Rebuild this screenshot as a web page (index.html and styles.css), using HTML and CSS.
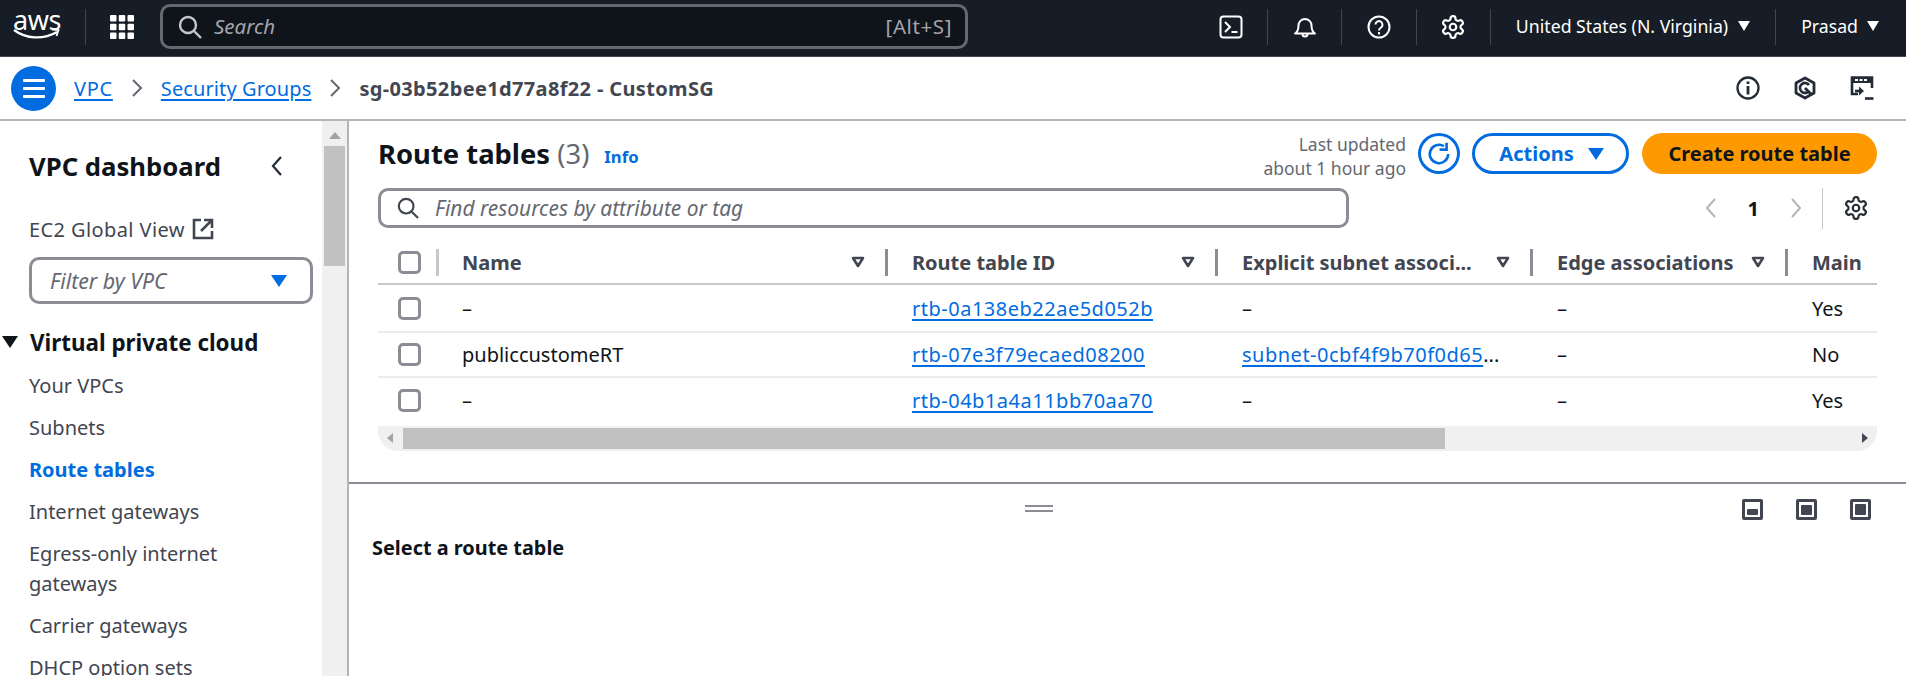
FILE: index.html
```html
<!DOCTYPE html>
<html lang="en">
<head>
<meta charset="utf-8">
<title>Route tables | VPC Console</title>
<link rel="stylesheet" href="styles.css">
</head>
<body>
<header class="topbar">
  <div class="aws"><span class="awstext">aws</span><svg viewBox="0 0 48 14" width="48" height="14" fill="none" stroke="#fff"><path d="M1 2c12 9 29 10 43 2" stroke-width="2.200"/><path d="M39 1.500l6.500.5-2 6" stroke-width="1.800"/></svg></div>
  <span class="tsep sep-logo"></span>
  <svg class="grid-ic" viewBox="0 0 24 24" width="24" height="24" fill="#fff"><rect width="6.500" height="6.500" rx="1"/><rect x="8.750" width="6.500" height="6.500" rx="1"/><rect x="17.500" width="6.500" height="6.500" rx="1"/><rect y="8.750" width="6.500" height="6.500" rx="1"/><rect x="8.750" y="8.750" width="6.500" height="6.500" rx="1"/><rect x="17.500" y="8.750" width="6.500" height="6.500" rx="1"/><rect y="17.500" width="6.500" height="6.500" rx="1"/><rect x="8.750" y="17.500" width="6.500" height="6.500" rx="1"/><rect x="17.500" y="17.500" width="6.500" height="6.500" rx="1"/></svg>
  <div class="gsearch">
    <svg viewBox="0 0 24 24" width="24" height="24" fill="none" stroke="#c6c6cd" stroke-width="2.400"><circle cx="10" cy="10" r="8"/><path d="M16 16l7 7"/></svg>
    <span class="gsearch-ph">Search</span>
    <span class="gsearch-key">[Alt+S]</span>
  </div>
  <div class="tools">
    <span class="tool"><svg viewBox="0 0 24 24" width="24" height="24" fill="none" stroke="#fff" stroke-width="2"><rect x="1.500" y="1.500" width="21" height="21" rx="3"/><path d="M6 7l5 5-5 5M12.500 17h6"/></svg></span>
    <span class="tsep"></span>
    <span class="tool"><svg viewBox="0 0 24 24" width="24" height="24" fill="none" stroke="#fff" stroke-width="2"><path d="M2 18.500c2.500-1.500 3.500-3.500 3.500-8a6.500 6.500 0 0 1 13 0c0 4.500 1 6.500 3.500 8z" stroke-linejoin="round"/><path d="M9.500 19a2.500 2.500 0 0 0 5 0"/></svg></span>
    <span class="tsep"></span>
    <span class="tool"><svg viewBox="0 0 24 24" width="24" height="24" fill="none" stroke="#fff" stroke-width="2"><circle cx="12" cy="12" r="10.500"/><path d="M8.500 9.500a3.500 3.500 0 1 1 5.500 3c-1.300.8-2 1.500-2 3"/><path d="M12 17v2.500"/></svg></span>
    <span class="tsep"></span>
    <span class="tool"><svg viewBox="1 1 22 22" width="24" height="24" fill="none" stroke="#fff" stroke-width="2"><path d="M12.220 2h-.44a2 2 0 0 0-2 2v.18a2 2 0 0 1-1 1.730l-.43.25a2 2 0 0 1-2 0l-.15-.08a2 2 0 0 0-2.730.73l-.22.38a2 2 0 0 0 .73 2.730l.15.1a2 2 0 0 1 1 1.720v.51a2 2 0 0 1-1 1.740l-.15.09a2 2 0 0 0-.73 2.730l.22.38a2 2 0 0 0 2.730.73l.15-.08a2 2 0 0 1 2 0l.43.25a2 2 0 0 1 1 1.730V20a2 2 0 0 0 2 2h.44a2 2 0 0 0 2-2v-.18a2 2 0 0 1 1-1.730l.43-.25a2 2 0 0 1 2 0l.15.08a2 2 0 0 0 2.730-.73l.22-.39a2 2 0 0 0-.73-2.730l-.15-.08a2 2 0 0 1-1-1.740v-.5a2 2 0 0 1 1-1.740l.15-.09a2 2 0 0 0 .73-2.730l-.22-.38a2 2 0 0 0-2.730-.73l-.15.08a2 2 0 0 1-2 0l-.43-.25a2 2 0 0 1-1-1.730V4a2 2 0 0 0-2-2z"/><circle cx="12" cy="12" r="3"/></svg></span>
    <span class="tsep"></span>
    <span class="region">United States (N. Virginia)<i class="caret-w"></i></span>
    <span class="tsep"></span>
    <span class="user">Prasad<i class="caret-w"></i></span>
  </div>
</header>
<nav class="crumbs">
  <span class="burger"><i></i><i></i><i></i></span>
  <a class="link crumb-first">VPC</a>
  <svg class="crumb-chev" viewBox="0 0 12 18" width="12" height="18" fill="none" stroke="#656871" stroke-width="2"><path d="M2 1l8 8-8 8"/></svg>
  <a class="link crumb-second">Security Groups</a>
  <svg class="crumb-chev" viewBox="0 0 12 18" width="12" height="18" fill="none" stroke="#656871" stroke-width="2"><path d="M2 1l8 8-8 8"/></svg>
  <span class="crumb-cur">sg-03b52bee1d77a8f22 - CustomSG</span>
  <div class="crumb-tools">
    <svg viewBox="0 0 24 24" width="24" height="24" fill="none" stroke="#232b37" stroke-width="2.300"><circle cx="12" cy="12" r="10.500"/><path d="M12 10v8.500M12 5.500v2.500" stroke-width="2.800"/></svg>
    <svg viewBox="0 0 24 24" width="24" height="24" fill="none" stroke="#232b37" stroke-width="2.800"><path d="M12 2l9 5v10l-9 5-9-5V7z" stroke-linejoin="round"/><path d="M16 9a5 5 0 1 0-1 7M12 12l6 6"/></svg>
    <svg viewBox="0 0 24 24" width="24" height="24" fill="none" stroke="#232b37"><path d="M8 18H2V1.500h20V12" stroke-width="2.600"/><rect x="1" y="1" width="22" height="6" fill="#232b37" stroke="none"/><path d="M5 4h3M9.500 4h3M14 4h3" stroke="#fff" stroke-width="2"/><path d="M5 15h7" stroke-width="2.600"/><path d="M9 10.500l5 4.500-5 4.500z" fill="#232b37" stroke="none"/><path d="M15 22.500h8.500" stroke-width="2.600"/></svg>
  </div>
</nav>
<div class="layout">
  <aside class="side">
    <div class="side-head"><h2>VPC dashboard</h2><svg viewBox="0 0 12 20" width="12" height="20" fill="none" stroke="#232b37" stroke-width="2.200"><path d="M10 1L2 10l8 9"/></svg></div>
    <div class="side-ec2">EC2 Global View<svg viewBox="0 0 22 22" width="22" height="22" fill="none" stroke="#424650" stroke-width="2.600"><path d="M9 2H2v18h18v-7M12 2h8v8M20 2L9 13"/></svg></div>
    <div class="vpc-filter"><span>Filter by VPC</span><i class="caret-b"></i></div>
    <h3 class="side-section"><i class="caret-k"></i>Virtual private cloud</h3>
    <ul class="side-list">
      <li>Your VPCs</li>
      <li>Subnets</li>
      <li class="active">Route tables</li>
      <li>Internet gateways</li>
      <li>Egress-only internet gateways</li>
      <li>Carrier gateways</li>
      <li>DHCP option sets</li>
    </ul>
  </aside>
  <div class="side-scroll"><i class="arrow-up"></i><div class="side-thumb"></div></div>
  <main class="main">
    <section class="top-pane">
      <div class="title-row">
        <h1>Route tables <span class="count">(3)</span></h1>
        <a class="info">Info</a>
        <div class="updated">Last updated<br>about 1 hour ago</div>
        <span class="refresh"><svg viewBox="0 0 24 24" width="26" height="26" fill="none" stroke="#006ce0" stroke-width="2.400"><path d="M20.500 12a8.500 8.500 0 1 1-4-7.200"/><path d="M19 1.500V8h-6.500"/></svg></span>
        <span class="btn-actions">Actions<i class="caret-b"></i></span>
        <span class="btn-create">Create route table</span>
      </div>
      <div class="filter-row">
        <div class="find">
          <svg viewBox="0 0 24 24" width="22" height="22" fill="none" stroke="#424650" stroke-width="2.400"><circle cx="10" cy="10" r="8"/><path d="M16 16l7 7"/></svg>
          <span>Find resources by attribute or tag</span>
        </div>
        <div class="pager">
          <svg viewBox="0 0 12 20" width="12" height="20" fill="none" stroke="#b4b4bb" stroke-width="2"><path d="M10 1L2 10l8 9"/></svg>
          <b>1</b>
          <svg viewBox="0 0 12 20" width="12" height="20" fill="none" stroke="#b4b4bb" stroke-width="2"><path d="M2 1l8 9-8 9"/></svg>
          <span class="pager-sep"></span>
          <svg class="pager-gear" viewBox="1 1 22 22" width="24" height="24" fill="none" stroke="#232b37" stroke-width="2"><path d="M12.220 2h-.44a2 2 0 0 0-2 2v.18a2 2 0 0 1-1 1.730l-.43.25a2 2 0 0 1-2 0l-.15-.08a2 2 0 0 0-2.730.73l-.22.38a2 2 0 0 0 .73 2.730l.15.1a2 2 0 0 1 1 1.720v.51a2 2 0 0 1-1 1.740l-.15.09a2 2 0 0 0-.73 2.730l.22.38a2 2 0 0 0 2.730.73l.15-.08a2 2 0 0 1 2 0l.43.25a2 2 0 0 1 1 1.730V20a2 2 0 0 0 2 2h.44a2 2 0 0 0 2-2v-.18a2 2 0 0 1 1-1.730l.43-.25a2 2 0 0 1 2 0l.15.08a2 2 0 0 0 2.730-.73l.22-.39a2 2 0 0 0-.73-2.730l-.15-.08a2 2 0 0 1-1-1.740v-.5a2 2 0 0 1 1-1.740l.15-.09a2 2 0 0 0 .73-2.730l-.22-.38a2 2 0 0 0-2.730-.73l-.15.08a2 2 0 0 1-2 0l-.43-.25a2 2 0 0 1-1-1.730V4a2 2 0 0 0-2-2z"/><circle cx="12" cy="12" r="3"/></svg>
        </div>
      </div>
      <div class="table">
        <div class="tr head">
          <div class="td check"><i class="cb"></i></div>
          <div class="td"><span>Name</span><svg class="sort" viewBox="0 0 14 12" width="14" height="12"><path d="M2 2h10l-5 8z" fill="#fff" stroke="#424650" stroke-width="2.600" stroke-linejoin="round"/></svg></div>
          <div class="td"><span>Route table ID</span><svg class="sort" viewBox="0 0 14 12" width="14" height="12"><path d="M2 2h10l-5 8z" fill="#fff" stroke="#424650" stroke-width="2.600" stroke-linejoin="round"/></svg></div>
          <div class="td"><span>Explicit subnet associ...</span><svg class="sort" viewBox="0 0 14 12" width="14" height="12"><path d="M2 2h10l-5 8z" fill="#fff" stroke="#424650" stroke-width="2.600" stroke-linejoin="round"/></svg></div>
          <div class="td"><span>Edge associations</span><svg class="sort" viewBox="0 0 14 12" width="14" height="12"><path d="M2 2h10l-5 8z" fill="#fff" stroke="#424650" stroke-width="2.600" stroke-linejoin="round"/></svg></div>
          <div class="td last"><span>Main</span></div>
        </div>
        <div class="tr r1">
          <div class="td check"><i class="cb"></i></div>
          <div class="td">–</div>
          <div class="td"><a class="link id">rtb-0a138eb22ae5d052b</a></div>
          <div class="td">–</div>
          <div class="td">–</div>
          <div class="td last">Yes</div>
        </div>
        <div class="tr r2">
          <div class="td check"><i class="cb"></i></div>
          <div class="td">publiccustomeRT</div>
          <div class="td"><a class="link id">rtb-07e3f79ecaed08200</a></div>
          <div class="td"><a class="link id">subnet-0cbf4f9b70f0d65</a>...</div>
          <div class="td">–</div>
          <div class="td last">No</div>
        </div>
        <div class="tr r3">
          <div class="td check"><i class="cb"></i></div>
          <div class="td">–</div>
          <div class="td"><a class="link id">rtb-04b1a4a11bb70aa70</a></div>
          <div class="td">–</div>
          <div class="td">–</div>
          <div class="td last">Yes</div>
        </div>
      </div>
      <div class="hscroll"><i class="arrow-l"></i><div class="hthumb"></div><i class="arrow-r"></i></div>
    </section>
    <section class="bottom-pane">
      <div class="pane-bar">
        <span class="handle"></span>
        <div class="pane-icons">
          <span class="pane-ic"><i class="fill-s"></i></span>
          <span class="pane-ic"><i class="fill-m"></i></span>
          <span class="pane-ic"><i class="fill-l"></i></span>
        </div>
      </div>
      <h4>Select a route table</h4>
    </section>
  </main>
</div>
</body>
</html>
```
FILE: styles.css
```css
* { box-sizing: border-box; }
html, body { margin: 0; height: 676px; overflow: hidden; }
body { font-family: "Noto Sans", "Open Sans", sans-serif; font-size: 20px; color: #0f141a; background: #fff; }
i { display: block; font-style: normal; }
h1, h2, h3, h4 { margin: 0; }

.topbar { height: 57px; background: #161d26; border-bottom: 1px solid #414750; display: flex; align-items: center; padding: 0 27px 3px 13px; color: #fff; }
.aws { flex: none; width: 48px; display: flex; flex-direction: column; align-items: center; }
.awstext { font-size: 27px; line-height: 17px; height: 17px; color: #fff; letter-spacing: -.5px; }
.tsep { width: 1px; height: 36px; background: #424650; flex: none; }
.sep-logo { margin-left: 24px; }
.grid-ic { margin-left: 24px; flex: none; }
.gsearch { width: 808px; height: 45px; margin-left: 26px; background: #0f141a; border: 3px solid #656871; border-radius: 10px; display: flex; align-items: center; padding: 0 13px 0 15px; }
.gsearch-ph { margin-left: 12px; padding-bottom: 2px; font-size: 20.500px; font-style: italic; color: #a4a4ad; }
.gsearch-key { margin-left: auto; padding-bottom: 2px; font-size: 20.500px; letter-spacing: .6px; color: #a4a4ad; }
.tools { margin-left: auto; display: flex; align-items: center; }
.tool { width: 73.200px; display: flex; justify-content: center; }
.region { padding: 0 25px 2px 25px; display: flex; align-items: center; gap: 10px; font-size: 17.700px; white-space: nowrap; }
.user { padding: 0 0 2px 25px; display: flex; align-items: center; gap: 9px; font-size: 17.700px; }
.caret-w { width: 0; height: 0; border-left: 6.500px solid transparent; border-right: 6.500px solid transparent; border-top: 10px solid #fff; }

.crumbs { height: 64px; border-bottom: 2px solid #b4b4bb; display: flex; align-items: center; padding: 0 32px 0 11px; }
.burger { width: 45px; height: 45px; border-radius: 50%; background: #006ce0; display: flex; flex-direction: column; justify-content: center; align-items: center; gap: 5px; flex: none; }
.burger i { width: 22px; height: 3px; background: #fff; border-radius: 1px; }
.link { color: #006ce0; text-decoration: underline; text-underline-offset: 3px; text-decoration-thickness: 2px; }
.crumb-first { margin-left: 18px; letter-spacing: .7px; }
.crumb-second { letter-spacing: .1px; }
.crumb-chev { margin: 0 18px; flex: none; }
.crumb-cur { color: #424650; font-weight: 700; letter-spacing: .35px; white-space: nowrap; }
.crumb-tools { margin-left: auto; display: flex; gap: 33px; }

.layout { display: flex; height: 555px; overflow: hidden; }
.side { width: 322px; flex: none; padding: 27px 0 0 29px; overflow: hidden; color: #424650; }
.side-head { display: flex; align-items: center; justify-content: space-between; width: 254px; height: 36px; color: #0f141a; }
.side-head h2 { font-size: 25.700px; font-weight: 700; white-space: nowrap; }
.side-ec2 { margin-top: 30px; display: flex; align-items: center; gap: 7px; height: 30px; letter-spacing: .4px; }
.vpc-filter { margin-top: 13px; width: 284px; height: 47px; border: 3px solid #8c8c94; border-radius: 10px; display: flex; align-items: center; justify-content: space-between; padding: 0 23px 0 18px; color: #656871; font-size: 21.300px; font-style: italic; }
.caret-b { width: 0; height: 0; border-left: 8px solid transparent; border-right: 8px solid transparent; border-top: 12px solid #006ce0; }
.side-section { margin: 22px 0 0 -27px; display: flex; align-items: center; gap: 12px; font-size: 22.400px; color: #0f141a; height: 32px; white-space: nowrap; }
.caret-k { width: 0; height: 0; border-left: 8px solid transparent; border-right: 8px solid transparent; border-top: 12px solid #0f141a; }
.side-list { list-style: none; margin: 13px 0 0; padding: 0; width: 245px; }
.side-list li { line-height: 30px; margin-bottom: 12px; }
.side-list .active { color: #006ce0; font-weight: 700; }

.side-scroll { width: 25px; flex: none; background: #f0f0f0; padding: 0 2px; }
.arrow-up { width: 0; height: 0; margin: 11px auto 7px; border-left: 6px solid transparent; border-right: 6px solid transparent; border-bottom: 7px solid #a3a3a3; }
.side-thumb { height: 120px; background: #c1c1c1; }

.main { flex: 1; border-left: 2px solid #b4b4bb; min-width: 0; display: flex; flex-direction: column; }
.top-pane { height: 363px; padding: 12px 29px 0 29px; border-bottom: 2px solid #8c8c94; flex: none; }
.title-row { display: flex; align-items: center; height: 41px; }
.title-row h1 { font-size: 27.400px; font-weight: 700; white-space: nowrap; }
.count { color: #656871; font-weight: 400; }
.info { color: #006ce0; font-weight: 700; font-size: 16.700px; margin-left: 15px; padding-top: 6px; }
.updated { margin-left: auto; padding-top: 4px; text-align: right; color: #656871; font-size: 17.500px; line-height: 24px; }
.refresh { width: 42px; height: 41px; border: 3px solid #006ce0; border-radius: 50%; margin-left: 12px; display: flex; align-items: center; justify-content: center; flex: none; }
.btn-actions { width: 157px; height: 41px; border: 3px solid #006ce0; border-radius: 21px; margin-left: 12px; padding-left: 2px; display: flex; align-items: center; justify-content: center; gap: 14px; color: #006ce0; font-weight: 700; flex: none; }
.btn-create { width: 235px; height: 41px; background: #ff9900; border-radius: 21px; margin-left: 13px; display: flex; align-items: center; justify-content: center; color: #0f141a; font-weight: 700; flex: none; }

.filter-row { display: flex; align-items: center; margin-top: 14px; height: 40px; }
.find { width: 971px; height: 40px; border: 3px solid #8c8c94; border-radius: 10px; display: flex; align-items: center; padding: 0 16px; gap: 16px; color: #656871; font-size: 20.900px; font-style: italic; }
.pager { margin-left: auto; display: flex; align-items: center; height: 40px; }
.pager b { margin: 0 31px; font-size: 20px; color: #0f141a; }
.pager-sep { width: 1px; height: 41px; background: #c6c6cd; margin-left: 20px; }
.pager-gear { margin: 0 9px 0 21px; }

.table { margin-top: 13px; }
.tr { display: grid; grid-template-columns: 58px 449px 330px 315px 255px 1fr; border-bottom: 2px solid #ebebf0; align-items: center; }
.tr.head { height: 44px; border-bottom-color: #c6c6cd; color: #424650; font-weight: 700; }
.r1 { height: 48px; }
.r2 { height: 45px; }
.r3 { height: 48px; padding-bottom: 4px; border-bottom: 0; }
.td { padding-left: 27px; white-space: nowrap; overflow: hidden; display: flex; align-items: center; height: 100%; }
.tr .td:nth-child(2) { padding-left: 26px; }
.td.check { padding-left: 20px; }
.id { letter-spacing: .5px; }
.head .td { height: 27px; border-left: 3px solid #8c8c94; padding-left: 24px; justify-content: space-between; padding-right: 20px; }
.head .td:nth-child(2) { border-left-color: #c6c6cd; padding-left: 23px; }
.head .td.check { border: 0; padding: 0 0 0 20px; }
.cb { width: 23px; height: 23px; border: 3px solid #8c8c94; border-radius: 5px; background: #fff; flex: none; }
.sort { flex: none; }

.hscroll { height: 25px; background: #f0f0f0; border-radius: 0 0 20px 20px; display: flex; align-items: center; padding-left: 25px; position: relative; }
.hthumb { width: 1042px; height: 21px; background: #c1c1c1; }
.arrow-l, .arrow-r { position: absolute; top: 7px; width: 0; height: 0; border-top: 5.500px solid transparent; border-bottom: 5.500px solid transparent; }
.arrow-l { left: 9px; border-right: 6px solid #a3a3a3; }
.arrow-r { right: 9px; border-left: 6px solid #424650; }

.bottom-pane { flex: 1; padding: 0 35px 0 23px; }
.pane-bar { position: relative; height: 40px; display: flex; align-items: center; justify-content: flex-end; margin-top: 5px; }
.handle { position: absolute; left: 653px; top: 16px; width: 28px; height: 7px; border-top: 2px solid #8c8c94; border-bottom: 2px solid #8c8c94; }
.pane-icons { display: flex; gap: 33px; }
.pane-ic { width: 21px; height: 21px; border: 3px solid #424650; border-radius: 2px; display: flex; align-items: flex-end; padding: 2px; }
.pane-ic i { width: 100%; background: #424650; border-radius: 1px; }
.fill-s { height: 6px; }
.fill-m { height: 10px; }
.fill-l { height: 100%; }
.bottom-pane h4 { font-size: 19.900px; margin-top: 5px; }
```
